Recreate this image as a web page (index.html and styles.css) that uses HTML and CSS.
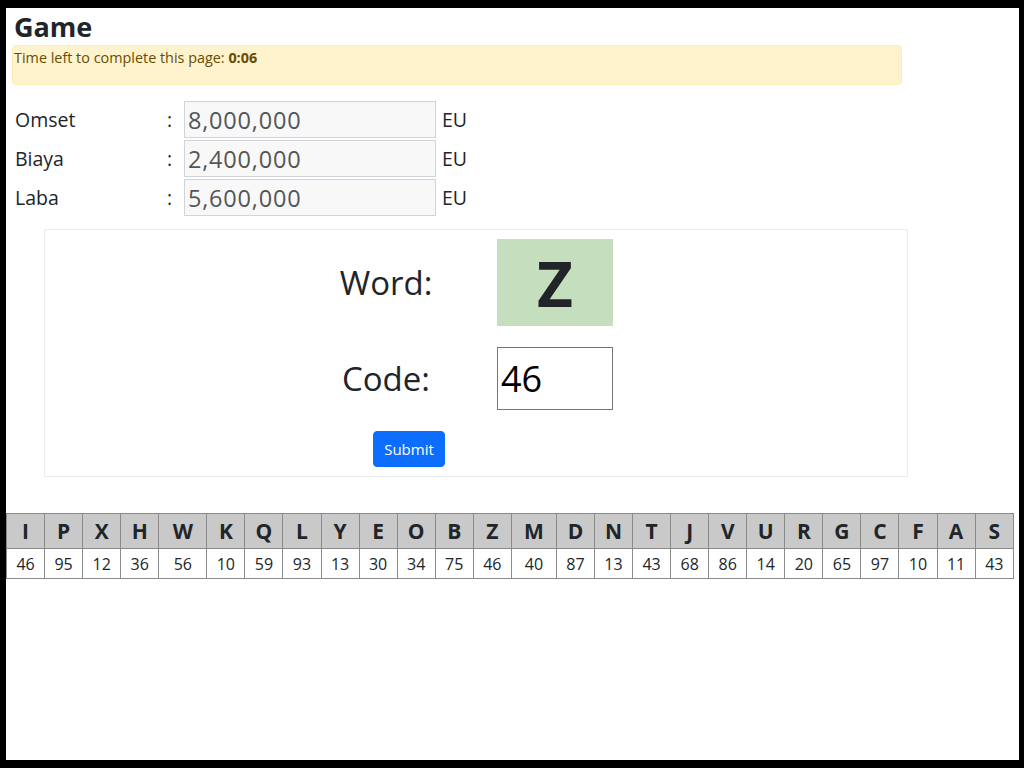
FILE: index.html
```html
<!DOCTYPE html>
<html lang="en">
<head>
<meta charset="utf-8">
<title>Game</title>
<link rel="stylesheet" href="styles.css">
</head>
<body>
<div class="page">
  <h1 class="title">Game</h1>
  <div class="alert">Time left to complete this page: <b>0:06</b></div>

  <div class="fin">
    <div class="fin-row"><span class="fin-label">Omset</span><span class="fin-colon">:</span><input class="fin-input" value="8,000,000" readonly><span class="fin-unit">EU</span></div>
    <div class="fin-row"><span class="fin-label">Biaya</span><span class="fin-colon">:</span><input class="fin-input" value="2,400,000" readonly><span class="fin-unit">EU</span></div>
    <div class="fin-row"><span class="fin-label">Laba</span><span class="fin-colon">:</span><input class="fin-input" value="5,600,000" readonly><span class="fin-unit">EU</span></div>
  </div>

  <div class="card">
    <div class="game-row">
      <div class="game-label">Word:</div>
      <div class="game-value"><div class="word-box">Z</div></div>
    </div>
    <div class="game-row">
      <div class="game-label">Code:</div>
      <div class="game-value"><input class="code-input" value="46"></div>
    </div>
    <div class="btn-row"><button class="btn">Submit</button></div>
  </div>

  <table class="codes">
    <colgroup>
      <col class="c"><col class="c"><col class="c"><col class="c"><col class="cw"><col class="c"><col class="c"><col class="c"><col class="c"><col class="c"><col class="c"><col class="c"><col class="c"><col class="cm"><col class="c"><col class="c"><col class="c"><col class="c"><col class="c"><col class="c"><col class="c"><col class="c"><col class="c"><col class="c"><col class="c"><col class="c">
    </colgroup>
    <tr class="head">
      <th>I</th><th>P</th><th>X</th><th>H</th><th>W</th><th>K</th><th>Q</th><th>L</th><th>Y</th><th>E</th><th>O</th><th>B</th><th>Z</th><th>M</th><th>D</th><th>N</th><th>T</th><th>J</th><th>V</th><th>U</th><th>R</th><th>G</th><th>C</th><th>F</th><th>A</th><th>S</th>
    </tr>
    <tr class="vals">
      <td>46</td><td>95</td><td>12</td><td>36</td><td>56</td><td>10</td><td>59</td><td>93</td><td>13</td><td>30</td><td>34</td><td>75</td><td>46</td><td>40</td><td>87</td><td>13</td><td>43</td><td>68</td><td>86</td><td>14</td><td>20</td><td>65</td><td>97</td><td>10</td><td>11</td><td>43</td>
    </tr>
  </table>
</div>
</body>
</html>
```

FILE: styles.css
```css
html {
  background: #000;
  margin: 0;
  padding: 0;
}
body {
  margin: 8px 5px 8px 6px;
  background: #fff;
  height: 752px;
  font-family: "Open Sans", "Noto Sans", sans-serif;
  color: #212529;
  overflow: hidden;
}
.title {
  margin: 2px 0 1px 8px;
  font-size: 27px;
  line-height: 34px;
  font-weight: 700;
}
.alert {
  margin-left: 6px;
  width: 886px;
  background: #fff3cd;
  border: 1px solid #ffecb5;
  border-radius: 4px;
  color: #664d03;
  font-size: 14.4px;
  line-height: 20px;
  padding: 2px 1px 16px 1px;
}
.alert b {
  font-weight: 700;
}
.fin {
  margin: 16px 0 0 9px;
  display: flex;
  flex-direction: column;
  gap: 2px;
}
.fin-row {
  display: grid;
  grid-template-columns: 152px 17px 252px auto;
  align-items: center;
  font-size: 19.5px;
}
.fin-input {
  box-sizing: border-box;
  height: 37px;
  width: 252px;
  border: 1px solid #ced4da;
  background: #f8f8f8;
  color: #555;
  font-family: inherit;
  font-size: 23.5px;
  letter-spacing: 0.8px;
  padding: 0 3px;
  margin: 0;
}
.fin-unit {
  padding-left: 6px;
}
.card {
  margin: 13px 0 0 38px;
  width: 862px;
  border: 1px solid #e9ecef;
  padding: 9px 0 9px 0;
  display: flex;
  flex-direction: column;
  gap: 21px;
}
.game-row {
  display: flex;
  justify-content: center;
  align-items: center;
}
.game-label {
  width: 180px;
  text-align: center;
  font-size: 33px;
}
.game-value {
  width: 180px;
  padding-left: 21px;
  box-sizing: border-box;
}
.word-box {
  width: 116px;
  height: 87px;
  background: #c5dfbe;
  display: flex;
  align-items: center;
  justify-content: center;
  font-size: 62px;
  font-weight: 700;
  color: #212529;
}
.code-input {
  box-sizing: border-box;
  width: 116px;
  height: 63px;
  border: 1px solid #767676;
  font-family: inherit;
  font-size: 36px;
  padding: 0 3px;
  color: #000;
  margin: 0;
}
.btn-row {
  padding-left: 328px;
}
.btn {
  background: #0d6efd;
  color: #fff;
  border: 1px solid #0d6efd;
  border-radius: 4px;
  font-family: inherit;
  font-size: 15px;
  height: 36px;
  width: 72px;
  padding: 0;
}
.codes {
  margin-top: 36px;
  width: 1008px;
  table-layout: fixed;
  border-collapse: collapse;
}
.codes col.c { width: 38px; }
.codes col.cw { width: 48px; }
.codes col.cm { width: 45px; }
.codes th, .codes td {
  border: 1px solid #8a8a8a;
  text-align: center;
  padding: 0;
}
.codes th {
  background: #c9c9c9;
  height: 34px;
  font-size: 21px;
  font-weight: 700;
}
.codes td {
  height: 29px;
  font-size: 16px;
}
```
